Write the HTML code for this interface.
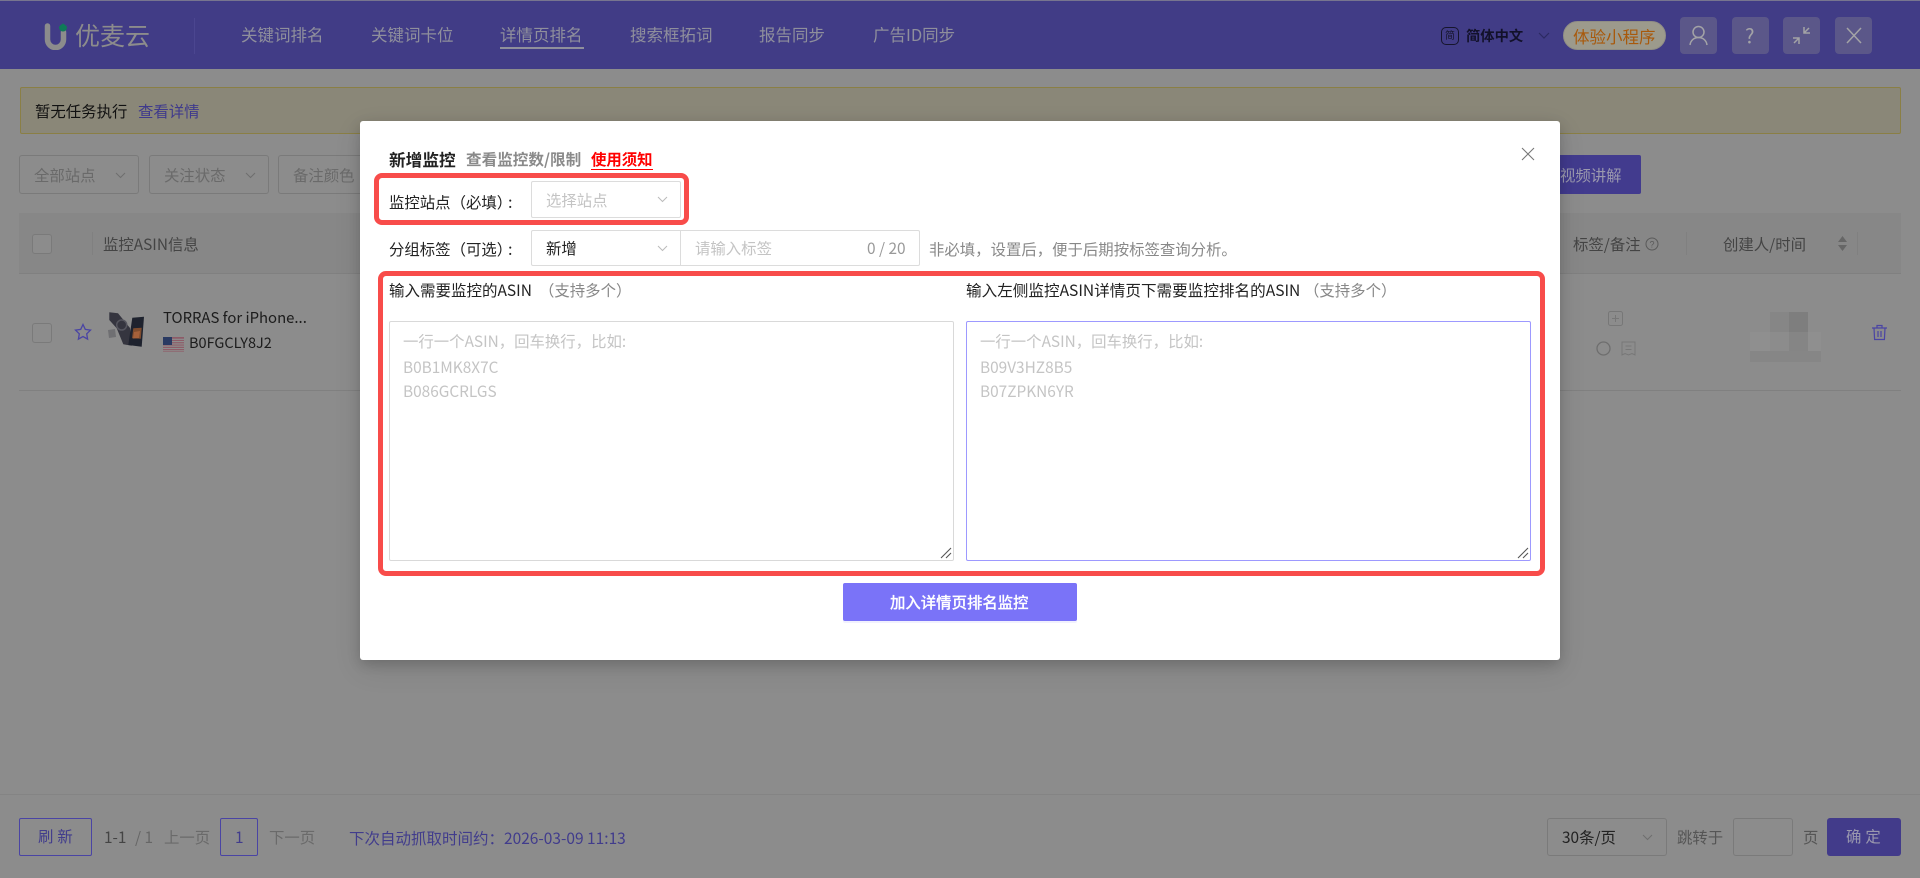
<!DOCTYPE html>
<html lang="zh-CN">
<head>
<meta charset="utf-8">
<title>优麦云</title>
<style>
html,body{margin:0;padding:0;width:1920px;height:878px;overflow:hidden;background:#8c8c8c}
body{position:relative;font-family:"Noto Sans CJK SC","Liberation Sans",sans-serif;font-size:15.4px;color:#222}
.t{position:absolute;white-space:nowrap;line-height:24px;height:24px}
.b{position:absolute;box-sizing:border-box}
svg{position:absolute;display:block}
.bg-b{border:1px solid #7a7a7a;border-radius:3px}
.nav{color:#8f8f9c;font-size:16.5px}
.hbtn{position:absolute;width:37px;height:37px;top:17px;background:#5b5789;border-radius:4px}
.m{color:#222}
.ph{color:#c4c4c4}
.c{margin-left:-4px}
</style>
</head>
<body>
<!-- header -->
<div class="b" style="left:0;top:0;width:1920px;height:69px;background:#413c86;border-top:1px solid #77758f"></div>
<svg style="left:44px;top:23px" width="24" height="27" viewBox="0 0 24 27"><path d="M3.500 3v13.500a8 8 0 0 0 16 0V9" fill="none" stroke="#8c8c8c" stroke-width="5.500" stroke-linecap="round"/><path d="M19 .5c2.500 1.500 4 2.700 4 4a4 4 0 0 1-8 0c0-1.300 1.500-2.500 4-4z" fill="#0f7a58"/></svg>
<div class="t" style="left:75px;top:22px;font-size:25px;line-height:26px;height:26px;color:#8c8c8c">优麦云</div>
<div class="b" style="left:194px;top:18px;width:1px;height:36px;background:#4b4690"></div>
<div class="t nav" style="left:241px;top:22px">关键词排名</div>
<div class="t nav" style="left:371px;top:22px">关键词卡位</div>
<div class="t nav" style="left:500px;top:22px">详情页排名</div>
<div class="b" style="left:500px;top:47px;width:84px;height:2px;background:#8f8f9c"></div>
<div class="t nav" style="left:630px;top:22px">搜索框拓词</div>
<div class="t nav" style="left:759px;top:22px">报告同步</div>
<div class="t nav" style="left:873px;top:22px">广告ID同步</div>
<div class="b" style="left:1441px;top:27px;width:18px;height:18px;border:1.500px solid #16152c;border-radius:5px"></div>
<div class="t" style="left:1445px;top:23px;font-size:10px;color:#16152c">简</div>
<div class="t" style="left:1466px;top:24px;font-size:14.300px;font-weight:700;color:#12112a">简体中文</div>
<svg style="left:1538px;top:32px" width="12" height="8" viewBox="0 0 12 8"><path d="M1 1l5 5 5-5" fill="none" stroke="#2c2a62" stroke-width="1.200"/></svg>
<div class="b" style="left:1563px;top:21px;width:103px;height:29px;border-radius:15px;background:#9c9a8c;border:1px solid #8f8d85"></div>
<div class="t" style="left:1573px;top:24px;font-size:16.500px;color:#a8590b">体验小程序</div>
<div class="hbtn" style="left:1680px"></div>
<svg style="left:1688px;top:25px" width="21" height="21" viewBox="0 0 21 21"><circle cx="10.500" cy="7" r="5.500" fill="none" stroke="#a3a3a6" stroke-width="1.500"/><path d="M2 20c.5-4.500 4-7.500 8.500-7.500S18.500 15.500 19 20" fill="none" stroke="#a3a3a6" stroke-width="1.500"/></svg>
<div class="hbtn" style="left:1732px"></div>
<div class="t" style="left:1745px;top:23px;font-size:20px;color:#a3a3a6">?</div>
<div class="hbtn" style="left:1783px"></div>
<svg style="left:1792px;top:26px" width="19" height="19" viewBox="0 0 19 19"><path d="M12 1v6h6M12 7l5-5M1 12h6v6M7 12l-5 5" fill="none" stroke="#a3a3a6" stroke-width="1.500"/></svg>
<div class="hbtn" style="left:1835px"></div>
<svg style="left:1846px;top:27px" width="16" height="17" viewBox="0 0 16 17"><path d="M1 1l14 15M15 1L1 16" fill="none" stroke="#a3a3a6" stroke-width="1.500"/></svg>

<!-- notice -->
<div class="b" style="left:20px;top:87px;width:1881px;height:47px;background:#8a8778;border:1px solid #8a7f45;border-radius:2px"></div>
<div class="t" style="left:35px;top:99px;color:#111">暂无任务执行</div>
<div class="t" style="left:138px;top:99px;color:#3f3a8c">查看详情</div>

<!-- filters -->
<div class="b bg-b" style="left:19px;top:155px;width:120px;height:39px"></div>
<div class="t" style="left:34px;top:163px;color:#6a6a6a">全部站点</div>
<svg style="left:115px;top:172px" width="11" height="7" viewBox="0 0 11 7"><path d="M1 1l4.500 4.500L10 1" fill="none" stroke="#6e6e6e" stroke-width="1"/></svg>
<div class="b bg-b" style="left:149px;top:155px;width:120px;height:39px"></div>
<div class="t" style="left:164px;top:163px;color:#6a6a6a">关注状态</div>
<svg style="left:245px;top:172px" width="11" height="7" viewBox="0 0 11 7"><path d="M1 1l4.500 4.500L10 1" fill="none" stroke="#6e6e6e" stroke-width="1"/></svg>
<div class="b bg-b" style="left:278px;top:155px;width:100px;height:39px"></div>
<div class="t" style="left:293px;top:163px;color:#6a6a6a">备注颜色</div>
<div class="b" style="left:1500px;top:155px;width:141px;height:39px;background:#423b8e;border-radius:2px"></div>
<div class="t" style="left:1560px;top:163px;color:#9a98ae">视频讲解</div>

<!-- table -->
<div class="b" style="left:19px;top:213px;width:1882px;height:61px;background:#878787;border-bottom:1px solid #808080"></div>
<div class="b bg-b" style="left:32px;top:234px;width:20px;height:20px;background:#8c8c8c"></div>
<div class="b" style="left:92px;top:232px;width:1px;height:23px;background:#808080"></div>
<div class="t" style="left:103px;top:232px;color:#444">监控ASIN信息</div>
<div class="t" style="left:1573px;top:232px;color:#444">标签/备注</div>
<svg style="left:1645px;top:237px" width="14" height="14" viewBox="0 0 14 14"><circle cx="7" cy="7" r="6" fill="none" stroke="#5a5a5a"/><text x="7" y="10.500" font-size="9" text-anchor="middle" fill="#5a5a5a" font-family="Liberation Sans">?</text></svg>
<div class="b" style="left:1686px;top:232px;width:1px;height:23px;background:#808080"></div>
<div class="t" style="left:1723px;top:232px;color:#444">创建人/时间</div>
<svg style="left:1838px;top:236px" width="9" height="15" viewBox="0 0 9 15"><path d="M4.500 0L9 6H0zM0 9h9l-4.500 6z" fill="#666"/></svg>
<div class="b" style="left:1857px;top:232px;width:1px;height:23px;background:#808080"></div>
<div class="b" style="left:19px;top:390px;width:1882px;height:1px;background:#808080"></div>
<div class="b bg-b" style="left:32px;top:323px;width:20px;height:20px"></div>
<svg style="left:74px;top:323px" width="18" height="18" viewBox="0 0 18 18"><path d="M9 1.500l2.300 4.900 5.200.7-3.800 3.700.9 5.300L9 13.500l-4.600 2.600.9-5.300L1.500 7.100l5.200-.7z" fill="none" stroke="#4a44a4" stroke-width="1.300"/></svg>
<svg style="left:108px;top:312px" width="38" height="37" viewBox="-1 0 38 37"><path d="M-1 18l7-1 1 8-7 1z" fill="#6f6f72"/><path d="M.3.300L9 1.300 21 16l1.700 17.700-8.400-1.400-6.600-16L.3 8z" fill="#35353f"/><circle cx="12.700" cy="13" r="5" fill="none" stroke="#55555e" stroke-width="1.500"/><path d="M23.300 5.700L35 4.700 32.700 34.700 19.300 33z" fill="#1e222e"/><path d="M24.300 16.300l8.400-.5-.9 11-8.800-.5z" fill="#7f4c2e"/><path d="M25 20l6-1-1 7-6 .5z" fill="#a5603a"/></svg>
<div class="t" style="left:163px;top:306px;color:#1c1c1c;font-size:14.900px">TORRAS for iPhone...</div>
<svg style="left:163px;top:337px" width="21" height="15" viewBox="0 0 21 15"><rect width="21" height="15" fill="#8d5c68"/><path d="M0 2.300h21M0 4.600h21M0 6.900h21M0 9.200h21M0 11.500h21M0 13.800h21" stroke="#8e8e8e" stroke-width="1.100"/><rect width="9" height="8" fill="#2a3a62"/></svg>
<div class="t" style="left:189px;top:331px;color:#1c1c1c;font-size:14.500px">B0FGCLY8J2</div>
<svg style="left:1608px;top:311px" width="15" height="15" viewBox="0 0 15 15"><rect x=".5" y=".5" width="14" height="14" rx="2" fill="none" stroke="#777"/><path d="M7.500 4v7M4 7.500h7" stroke="#777"/></svg>
<svg style="left:1596px;top:341px" width="15" height="15" viewBox="0 0 15 15"><circle cx="7.500" cy="7.500" r="6.500" fill="none" stroke="#6e6e6e" stroke-width="1.300"/></svg>
<svg style="left:1621px;top:341px" width="15" height="15" viewBox="0 0 15 15"><path d="M1 1h13v13l-3-1.500-3.500 1.500L4 12.500 1 14zM4.500 5h6M4.500 8.500h6" fill="none" stroke="#777"/></svg>
<!-- blurred block -->
<div class="b" style="left:1750px;top:332px;width:71px;height:30px;background:#8f8f8f"></div>
<div class="b" style="left:1770px;top:312px;width:19px;height:20px;background:#868686"></div>
<div class="b" style="left:1789px;top:312px;width:19px;height:20px;background:#7e7e7e"></div>
<div class="b" style="left:1770px;top:332px;width:19px;height:19px;background:#8c8c8c"></div>
<div class="b" style="left:1789px;top:332px;width:19px;height:19px;background:#858585"></div>
<div class="b" style="left:1750px;top:351px;width:71px;height:11px;background:#868686"></div>
<svg style="left:1871px;top:324px" width="17" height="17" viewBox="0 0 17 17"><path d="M1 4h15M6 4V1.500h5V4M3 4l.6 11.500h9.800L14 4M7 7v6M10 7v6" fill="none" stroke="#4a44a4" stroke-width="1.200"/></svg>

<!-- footer -->
<div class="b" style="left:0;top:794px;width:1920px;height:1px;background:#848484"></div>
<div class="b" style="left:19px;top:818px;width:73px;height:38px;border:1px solid #4a44a4;border-radius:2px"></div>
<div class="t" style="left:38px;top:824px;color:#413c8c;letter-spacing:4px">刷新</div>
<div class="t" style="left:104px;top:825px;color:#444">1-1</div>
<div class="t" style="left:135px;top:825px;color:#666">/ 1</div>
<div class="t" style="left:164px;top:825px;color:#6a6a6a">上一页</div>
<div class="b" style="left:220px;top:818px;width:38px;height:38px;border:1px solid #4a44a4;border-radius:2px"></div>
<div class="t" style="left:235px;top:825px;color:#413c8c">1</div>
<div class="t" style="left:269px;top:825px;color:#6a6a6a">下一页</div>
<div class="t" style="left:349px;top:826px;color:#413c8c;font-size:15.500px">下次自动抓取时间约：2026-03-09 11:13</div>
<div class="b bg-b" style="left:1547px;top:818px;width:120px;height:38px"></div>
<div class="t" style="left:1562px;top:825px;color:#222">30条/页</div>
<svg style="left:1642px;top:834px" width="11" height="7" viewBox="0 0 11 7"><path d="M1 1l4.500 4.500L10 1" fill="none" stroke="#6e6e6e"/></svg>
<div class="t" style="left:1677px;top:825px;color:#555">跳转于</div>
<div class="b bg-b" style="left:1733px;top:818px;width:60px;height:38px"></div>
<div class="t" style="left:1803px;top:825px;color:#555">页</div>
<div class="b" style="left:1827px;top:818px;width:74px;height:38px;background:#423b8a;border-radius:3px"></div>
<div class="t" style="left:1846px;top:824px;color:#9a98ae;letter-spacing:4px">确定</div>

<!-- modal -->
<div class="b" style="left:360px;top:121px;width:1200px;height:539px;background:#fff;border-radius:3px;box-shadow:0 4px 12px rgba(0,0,0,.16),0 9px 28px rgba(0,0,0,.1)"></div>
<div class="t" style="left:389px;top:147px;font-weight:700;color:#222;font-size:16.700px">新增监控</div>
<div class="t" style="left:466px;top:147px;font-weight:700;color:#8a8a8a;font-size:15.600px">查看监控数/限制</div>
<div class="t" style="left:591px;top:147px;font-weight:700;color:#f00;font-size:15.400px">使用须知</div>
<div class="b" style="left:591px;top:169px;width:62px;height:1px;background:#f00"></div>
<svg style="left:1521px;top:147px" width="14" height="14" viewBox="0 0 14 14"><path d="M1 1l12 12M13 1L1 13" fill="none" stroke="#777" stroke-width="1.100"/></svg>

<div class="b" style="left:374px;top:173px;width:315px;height:52px;border:5px solid #f84c4a;border-radius:8px"></div>
<div class="t m" style="left:389px;top:190px">监控站点（必填）<span class="c">:</span></div>
<div class="b" style="left:531px;top:181px;width:150px;height:37px;border:1px solid #dcdcdc;border-radius:2px"></div>
<div class="t ph" style="left:546px;top:188px">选择站点</div>
<svg style="left:657px;top:196px" width="11" height="7" viewBox="0 0 11 7"><path d="M1 1l4.500 4.500L10 1" fill="none" stroke="#bbb"/></svg>

<div class="t m" style="left:389px;top:237px">分组标签（可选）<span class="c">:</span></div>
<div class="b" style="left:531px;top:230px;width:389px;height:36px;border:1px solid #dcdcdc;border-radius:2px"></div>
<div class="b" style="left:680px;top:230px;width:1px;height:36px;background:#dcdcdc"></div>
<div class="t m" style="left:546px;top:236px">新增</div>
<svg style="left:657px;top:245px" width="11" height="7" viewBox="0 0 11 7"><path d="M1 1l4.500 4.500L10 1" fill="none" stroke="#bbb"/></svg>
<div class="t ph" style="left:695px;top:236px">请输入标签</div>
<div class="t" style="left:867px;top:236px;color:#999">0 / 20</div>
<div class="t" style="left:929px;top:237px;color:#888">非必填，设置后，便于后期按标签查询分析。</div>

<div class="b" style="left:378px;top:271px;width:1167px;height:305px;border:5px solid #f84c4a;border-radius:8px"></div>
<div class="t m" style="left:389px;top:278px;font-size:15.500px">输入需要监控的ASIN</div>
<div class="t" style="left:539px;top:278px;color:#888">（支持多个）</div>
<div class="t m" style="left:966px;top:278px;font-size:15.600px">输入左侧监控ASIN详情页下需要监控排名的ASIN</div>
<div class="t" style="left:1304px;top:278px;color:#888">（支持多个）</div>

<div class="b" style="left:389px;top:321px;width:565px;height:240px;border:1px solid #d9d9d9;border-radius:2px"></div>
<div class="t ph" style="left:403px;top:329px">一行一个ASIN，回车换行，比如:</div>
<div class="t ph" style="left:403px;top:355px">B0B1MK8X7C</div>
<div class="t ph" style="left:403px;top:379px">B086GCRLGS</div>
<svg style="left:940px;top:547px" width="12" height="12" viewBox="0 0 12 12"><path d="M1 11L11 1M6 11l5-5" stroke="#555" stroke-width="1.100"/></svg>

<div class="b" style="left:966px;top:321px;width:565px;height:240px;border:1px solid #9d99ff;border-radius:2px"></div>
<div class="t ph" style="left:980px;top:329px">一行一个ASIN，回车换行，比如:</div>
<div class="t ph" style="left:980px;top:355px">B09V3HZ8B5</div>
<div class="t ph" style="left:980px;top:379px">B07ZPKN6YR</div>
<svg style="left:1517px;top:547px" width="12" height="12" viewBox="0 0 12 12"><path d="M1 11L11 1M6 11l5-5" stroke="#555" stroke-width="1.100"/></svg>

<div class="b" style="left:843px;top:583px;width:234px;height:38px;background:#7a73f8;border-radius:2px;box-shadow:0 2px 0 rgba(122,115,248,.1)"></div>
<div class="t" style="left:890px;top:590px;color:#fff;font-weight:500;font-size:15.400px;-webkit-text-stroke:.2px #fff">加入详情页排名监控</div>
</body>
</html>
